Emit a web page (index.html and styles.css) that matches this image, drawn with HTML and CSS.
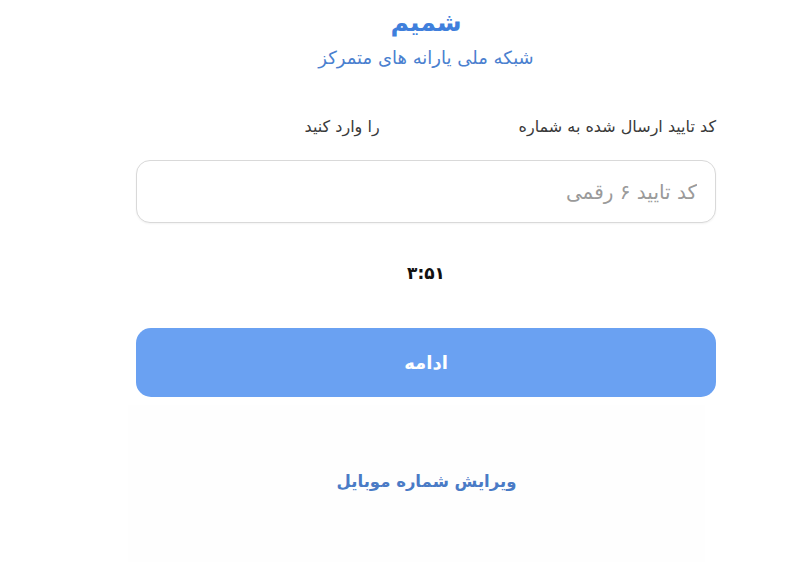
FILE: index.html
```html
<!DOCTYPE html>
<html lang="fa" dir="rtl">
<head>
<meta charset="utf-8">
<link rel="stylesheet" href="styles.css">
</head>
<body>
<main class="page">
  <header class="brand">
    <h1 class="brand-title">شمیم</h1>
    <p class="brand-sub">شبکه ملی یارانه های متمرکز</p>
  </header>
  <p class="hint"><span>کد تایید ارسال شده به شماره</span><span class="phone"></span><span>را وارد کنید</span></p>
  <div class="field"><input class="code-input" type="text" placeholder="کد تایید ۶ رقمی"></div>
  <div class="timer">۳:۵۱</div>
  <button class="btn-primary">ادامه</button>
  <div class="footer-area">
    <a class="edit-link">ویرایش شماره موبایل</a>
  </div>
</main>
</body>
</html>
```
FILE: styles.css
```css
html, body {
  margin: 0;
  padding: 0;
  background: #ffffff;
}
body {
  font-family: "DejaVu Sans", "Noto Sans", sans-serif;
  overflow: hidden;
}
.page {
  width: 580px;
  margin-right: 88px;
  display: flex;
  flex-direction: column;
}
.brand {
  text-align: center;
  padding-top: 5px;
}
.brand-title {
  margin: 0;
  font-size: 25px;
  line-height: 36px;
  font-weight: bold;
  color: #3f7fdc;
}
.brand-sub {
  margin: 4px 0 0;
  font-size: 18px;
  line-height: 26px;
  color: #4a80cf;
}
.hint {
  margin: 44px 0 0;
  font-size: 16px;
  line-height: 24px;
  color: #3a3a3a;
  display: flex;
}
.phone {
  width: 139px;
}
.field {
  margin-top: 21px;
}
.code-input {
  box-sizing: border-box;
  width: 100%;
  height: 63px;
  border: 1px solid #d9d9d9;
  border-radius: 14px;
  padding: 0 18px;
  font-family: inherit;
  font-size: 20px;
  color: #333;
  direction: rtl;
  outline: none;
  box-shadow: 0 1px 2px rgba(0,0,0,0.05);
}
.code-input::placeholder {
  color: #9a9a9a;
}
.timer {
  margin-top: 38px;
  text-align: center;
  font-size: 17px;
  font-weight: bold;
  line-height: 24px;
  color: #111;
}
.btn-primary {
  margin-top: 43px;
  height: 69px;
  border: none;
  border-radius: 15px;
  background: #6aa1f2;
  color: #ffffff;
  font-family: inherit;
  font-size: 18px;
  font-weight: bold;
}
.footer-area {
  margin-top: 8px;
  margin-left: -8px;
  margin-right: 11px;
  height: 170px;
  background: #fefefe;
  display: flex;
  justify-content: center;
  padding-top: 63px;
  padding-left: 20px;
  box-sizing: border-box;
}
.edit-link {
  font-size: 16.5px;
  font-weight: bold;
  line-height: 28px;
  color: #4a7bc6;
  cursor: pointer;
}
```
